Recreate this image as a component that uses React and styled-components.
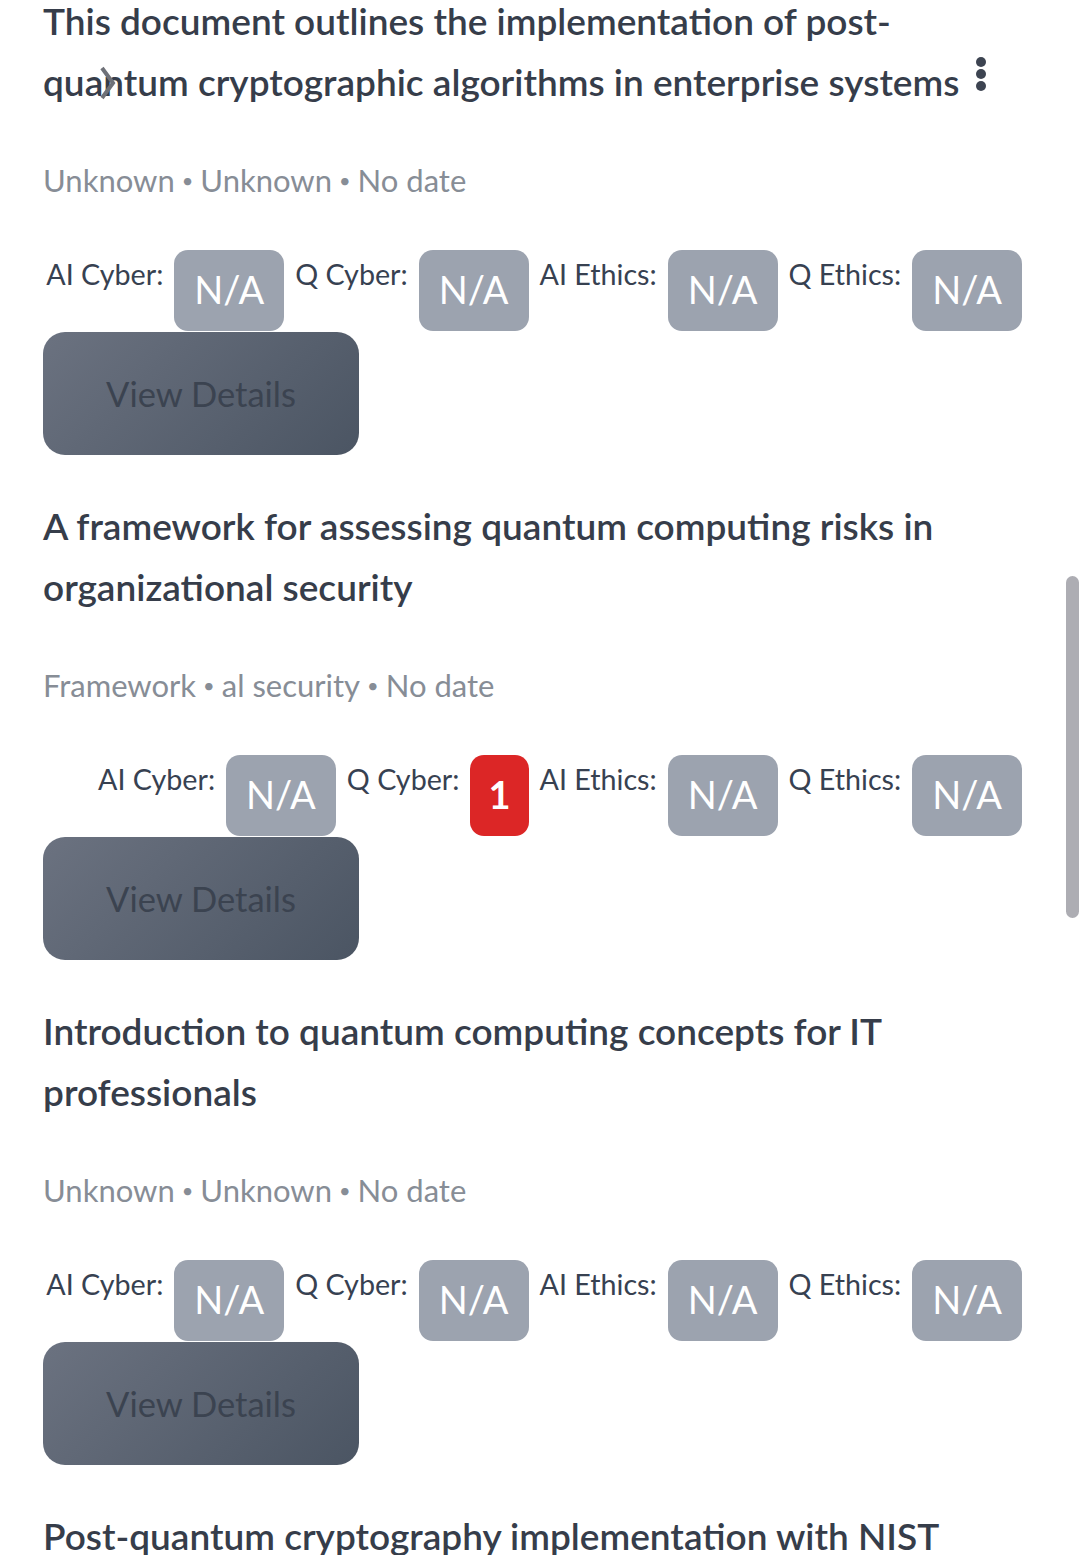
import React from "react";
import styled, { createGlobalStyle } from "styled-components";

const GlobalStyle = createGlobalStyle`
  html, body {
    margin: 0;
    padding: 0;
    background: #ffffff;
    overflow: hidden;
  }
  body {
    font-family: Lato, "Liberation Sans", sans-serif;
    color: #374151;
  }
`;

const Page = styled.main`
  height: 1555px;
  overflow: hidden;
`;

const List = styled.div`
  display: flex;
  flex-direction: column;
  gap: 40px;
  margin-top: -10px;
  padding: 0 57px 0 43px;
`;

const Card = styled.article`
  display: flex;
  flex-direction: column;
  align-items: flex-start;
`;

const Title = styled.h3`
  margin: 0;
  font-size: 37px;
  font-weight: 600;
  line-height: 61px;
  color: #363d4a;
`;

const Meta = styled.p`
  margin: 41px 0 0;
  font-size: 31px;
  line-height: 54px;
  color: #878d96;
`;

const Sep = styled.span`
  display: inline-block;
  margin: 0 7px;
  font-size: 20px;
  vertical-align: 0.2em;
`;

const Scores = styled.div`
  align-self: stretch;
  display: flex;
  flex-wrap: nowrap;
  justify-content: flex-end;
  align-items: flex-start;
  margin-top: 43px;
`;

const ScoreLabel = styled.span`
  margin: 0 11px 0 11px;
  padding-top: 4px;
  font-size: 28.7px;
  line-height: 40px;
  white-space: nowrap;
  color: #374151;
`;

const Badge = styled.span`
  display: inline-flex;
  align-items: center;
  justify-content: center;
  height: 81px;
  padding: 0 ${(p) => (p.$level ? 18 : 20)}px 3px;
  box-sizing: border-box;
  border-radius: 14px;
  background: ${(p) => (p.$level ? "#dc2626" : "#9ca3af")};
  color: #ffffff;
  font-size: 38px;
  font-weight: ${(p) => (p.$level ? 700 : 400)};
`;

const DetailsButton = styled.button`
  margin-top: 1px;
  width: 316px;
  height: 123px;
  border: none;
  border-radius: 22px;
  background: linear-gradient(135deg, #6b7280 0%, #4b5563 100%);
  color: #3b4350;
  font-family: inherit;
  font-size: 34.5px;
  cursor: pointer;
`;

const Header = styled.header`
  position: fixed;
  top: 0;
  left: 0;
  right: 0;
  height: 110px;
  pointer-events: none;
`;

const SidebarToggle = styled.svg`
  position: absolute;
  left: 98px;
  top: 66px;
`;

const MenuDots = styled.svg`
  position: absolute;
  left: 975px;
  top: 56px;
`;

const ScrollThumb = styled.div`
  position: fixed;
  right: 0;
  top: 576px;
  width: 13px;
  height: 342px;
  border-radius: 7px;
  background: #adadb3;
`;

const docs = [
  {
    title:
      "This document outlines the implementation of post-quantum cryptographic algorithms in enterprise systems",
    meta: ["Unknown", "Unknown", "No date"],
    scores: { aiCyber: null, qCyber: null, aiEthics: null, qEthics: null },
  },
  {
    title:
      "A framework for assessing quantum computing risks in organizational security",
    meta: ["Framework", "al security", "No date"],
    scores: { aiCyber: null, qCyber: 1, aiEthics: null, qEthics: null },
  },
  {
    title: "Introduction to quantum computing concepts for IT professionals",
    meta: ["Unknown", "Unknown", "No date"],
    scores: { aiCyber: null, qCyber: null, aiEthics: null, qEthics: null },
  },
  {
    title: "Post-quantum cryptography implementation with NIST standards",
    meta: ["Unknown", "Unknown", "No date"],
    scores: { aiCyber: null, qCyber: null, aiEthics: null, qEthics: null },
  },
];

const scoreFields = [
  ["aiCyber", "AI Cyber:"],
  ["qCyber", "Q Cyber:"],
  ["aiEthics", "AI Ethics:"],
  ["qEthics", "Q Ethics:"],
];

const DocumentCard = ({ doc }) => (
  <Card>
    <Title>{doc.title}</Title>
    <Meta>
      {doc.meta.map((part, i) => (
        <React.Fragment key={i}>
          {i > 0 && <Sep>•</Sep>}
          {part}
        </React.Fragment>
      ))}
    </Meta>
    <Scores>
      {scoreFields.map(([key, label]) => (
        <React.Fragment key={key}>
          <ScoreLabel>{label}</ScoreLabel>
          <Badge $level={doc.scores[key]}>
            {doc.scores[key] == null ? "N/A" : doc.scores[key]}
          </Badge>
        </React.Fragment>
      ))}
    </Scores>
    <DetailsButton>View Details</DetailsButton>
  </Card>
);

export default function App() {
  return (
    <Page>
      <GlobalStyle />
      <List>
        {docs.map((doc, i) => (
          <DocumentCard key={i} doc={doc} />
        ))}
      </List>
      <Header>
        <SidebarToggle width="18" height="34" viewBox="0 0 18 34">
          <polyline
            points="4,2 15,17 4,32"
            fill="none"
            stroke="#6f7178"
            strokeWidth="4"
          />
        </SidebarToggle>
        <MenuDots width="12" height="36" viewBox="0 0 12 36">
          <circle cx="6" cy="6" r="5" fill="#3d4451" />
          <circle cx="6" cy="18" r="5" fill="#3d4451" />
          <circle cx="6" cy="30" r="5" fill="#3d4451" />
        </MenuDots>
      </Header>
      <ScrollThumb />
    </Page>
  );
}
